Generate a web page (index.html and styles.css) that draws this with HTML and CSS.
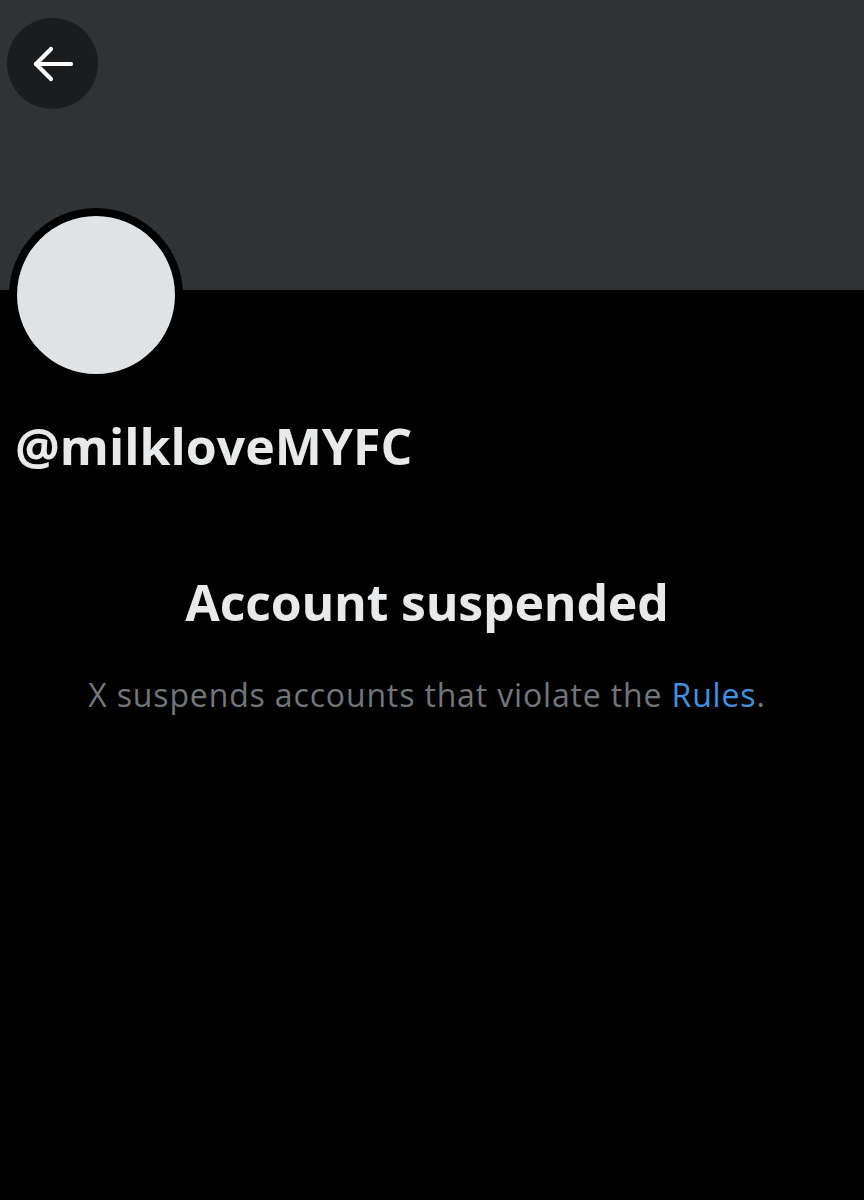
FILE: index.html
```html
<!DOCTYPE html>
<html lang="en">
<head>
<meta charset="utf-8">
<title>Account suspended</title>
<link rel="stylesheet" href="styles.css">
</head>
<body>
<div class="page">
  <header class="banner">
    <button class="back" aria-label="Back">
      <svg width="42" height="36" viewBox="0 0 42 36" fill="none" stroke="#ffffff" stroke-width="4.2" stroke-linecap="round" stroke-linejoin="round">
        <path d="M39 18H4"/>
        <path d="M19 3L4 18l15 15"/>
      </svg>
    </button>
  </header>
  <div class="profile">
    <div class="avatar-ring"><div class="avatar"></div></div>
    <div class="handle">@milkloveMYFC</div>
  </div>
  <section class="notice">
    <h1 class="title">Account suspended</h1>
    <p class="desc">X suspends accounts that violate the <a class="link" href="#">Rules</a>.</p>
  </section>
</div>
</body>
</html>
```
FILE: styles.css
```css
html, body {
  margin: 0;
  padding: 0;
  background: #000000;
}
body {
  font-family: "Open Sans", "Liberation Sans", sans-serif;
  color: #e7e9ea;
  width: 864px;
  height: 1200px;
  overflow: hidden;
}
.page {
  display: flex;
  flex-direction: column;
}
.banner {
  position: relative;
  height: 290px;
  background: #303336;
}
.back {
  position: absolute;
  left: 7px;
  top: 18px;
  width: 91px;
  height: 91px;
  border-radius: 50%;
  border: none;
  padding: 0;
  background: #1b1c1e;
  display: flex;
  align-items: center;
  justify-content: center;
}
.profile {
  position: relative;
  z-index: 1;
  display: flex;
  flex-direction: column;
  padding-left: 9px;
}
.avatar-ring {
  margin-top: -82px;
  width: 174px;
  height: 174px;
  border-radius: 50%;
  background: #000000;
  display: flex;
  align-items: center;
  justify-content: center;
}
.avatar {
  width: 158px;
  height: 158px;
  border-radius: 50%;
  background: #dfe3e6;
}
.handle {
  margin-top: 34px;
  margin-left: 6px;
  font-size: 50px;
  font-weight: 700;
  line-height: 60px;
  color: #e7e9ea;
  letter-spacing: 0px;
}
.notice {
  display: flex;
  flex-direction: column;
  align-items: center;
  padding-right: 10px;
  margin-top: 94px;
}
.title {
  margin: 0;
  font-size: 50px;
  font-weight: 700;
  line-height: 64px;
  color: #e7e9ea;
  letter-spacing: -0.2px;
}
.desc {
  margin: 41px 0 0;
  font-size: 32px;
  font-weight: 400;
  line-height: 40px;
  color: #71767b;
  letter-spacing: 0.85px;
}
.link {
  color: #3d93e0;
  text-decoration: none;
}
```
